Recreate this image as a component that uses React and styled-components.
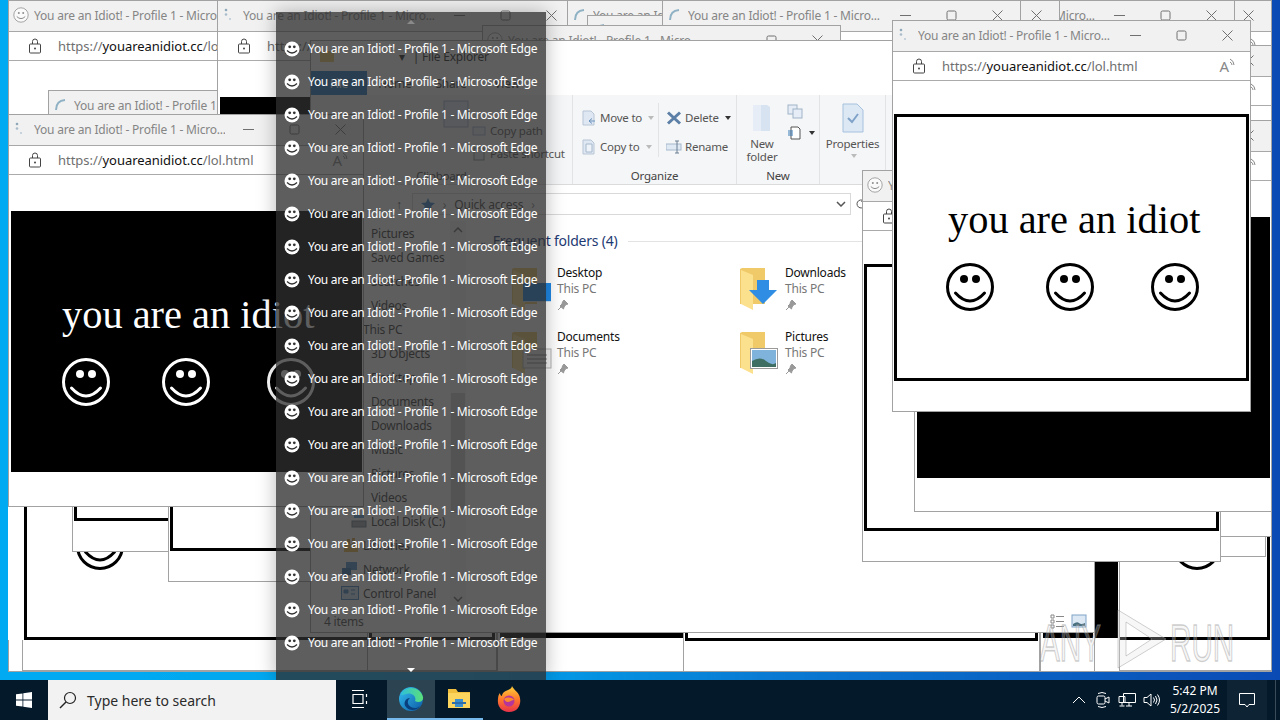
import React from "react";
import styled, { createGlobalStyle } from "styled-components";

const UI = `"Noto Sans", "Open Sans", sans-serif`;

const Global = createGlobalStyle`
  html, body { margin: 0; padding: 0; background: #000; }
  * { box-sizing: border-box; }
`;

const Screen = styled.div`
  width: 1280px;
  height: 720px;
  display: flex;
  flex-direction: column;
  overflow: hidden;
  font-family: ${UI};
`;

const Desktop = styled.div`
  position: relative;
  flex: 1;
  overflow: hidden;
  background: linear-gradient(90deg, #00aaf2 0%, #00a6ee 35%, #0a7ad2 60%, #0a4ab4 100%);
`;

const Frame = styled.div`
  position: absolute;
  left: ${(p) => p.$x}px;
  top: ${(p) => p.$y}px;
  width: ${(p) => p.$w}px;
  height: ${(p) => p.$h}px;
  background: #fff;
  border: 1px solid ${(p) => (p.$bare ? "#fff" : "#a2a2a2")};
  overflow: hidden;
  display: flex;
  flex-direction: column;
`;

const TitleBar = styled.div`
  flex: none;
  height: 31px;
  display: flex;
  align-items: center;
  padding: 0 0 2px 4px;
  background: #f1f1f1;
  border-bottom: 1px solid #a8a8a8;
`;

const TitleText = styled.span`
  flex: 1;
  min-width: 0;
  margin-left: 5px;
  font-size: 12px;
  letter-spacing: -0.2px;
  color: #858585;
  white-space: nowrap;
  overflow: hidden;
`;

const Ctl = styled.span`
  flex: none;
  width: 46px;
  height: 28px;
  display: flex;
  align-items: center;
  justify-content: center;
  color: #707070;
`;

const UrlBar = styled.div`
  flex: none;
  height: 29px;
  display: flex;
  align-items: center;
  padding: 0 14px 0 19px;
  border-bottom: 1px solid #ababab;
`;

const UrlText = styled.span`
  flex: 1;
  min-width: 0;
  margin-left: 16px;
  font-size: 13px;
  letter-spacing: -0.04px;
  color: #6f6f6f;
  white-space: nowrap;
  overflow: hidden;
  b { font-weight: 400; color: #111; }
`;

const ReadAloud = styled.span`
  flex: none;
  display: flex;
  align-items: flex-start;
  font-size: 15px;
  line-height: 17px;
  color: #888;
`;

const Page = styled.div`
  flex: 1;
  padding: 33px 1px 0;
`;

const Stage = styled.div`
  width: 100%;
  height: 267px;
  overflow: hidden;
  border-style: solid;
  border-width: ${(p) => (p.$dark ? "3px 0 3px 1px" : "3px")};
  border-color: ${(p) => (p.$dark ? "#fff" : "#000")};
  background: ${(p) => (p.$dark ? "#000" : "#fff")};
  color: ${(p) => (p.$dark ? "#fff" : "#000")};
`;

const StageInner = styled.div`
  width: 352px;
  padding: ${(p) => (p.$dark ? "81px 0 0 51px" : "80px 0 0 49px")};
`;

const Idiot = styled.div`
  margin-left: ${(p) => (p.$dark ? 0 : 2)}px;
  font-family: "Liberation Serif", serif;
  font-size: 40.4px;
  line-height: 46px;
  white-space: nowrap;
`;

const SmileRow = styled.div`
  display: grid;
  grid-template-columns: 100px 105px 48px;
  margin-top: 20px;
`;

const MinIcon = () => (
  <svg width="11" height="11" viewBox="0 0 11 11"><path d="M0 5.5h11" stroke="currentColor" fill="none" /></svg>
);
const MaxIcon = () => (
  <svg width="11" height="11" viewBox="0 0 11 11"><rect x="1" y="1" width="9" height="9" rx="1.5" stroke="currentColor" fill="none" /></svg>
);
const CloseIcon = () => (
  <svg width="11" height="11" viewBox="0 0 11 11"><path d="M.5.5l10 10M10.5.5l-10 10" stroke="currentColor" fill="none" /></svg>
);
const LockIcon = () => (
  <svg width="14" height="16" viewBox="0 0 14 16" style={{ flex: "none" }}>
    <rect x="1.5" y="6" width="11" height="9" rx="1" fill="none" stroke="#444" />
    <path d="M4.5 6V3.5a2.5 2.5 0 0 1 5 0V6" fill="none" stroke="#444" />
    <circle cx="7" cy="10.5" r="1" fill="#444" />
  </svg>
);

const TabIcon = ({ kind }) => {
  if (kind === "smile")
    return (
      <svg width="16" height="16" viewBox="0 0 16 16" style={{ flex: "none" }}>
        <circle cx="8" cy="8" r="7.2" fill="#fafafa" stroke="#a4a4a4" />
        <circle cx="5.8" cy="6" r="1" fill="#8d8d8d" />
        <circle cx="10.2" cy="6" r="1" fill="#8d8d8d" />
        <path d="M3.8 9.6Q8 13.6 12.2 9.6" fill="none" stroke="#8d8d8d" />
      </svg>
    );
  if (kind === "arc")
    return (
      <svg width="16" height="16" viewBox="0 0 16 16" style={{ flex: "none" }}>
        <path d="M3 13C3 7 6 3.500 12 3" fill="none" stroke="#8fb1c4" strokeWidth="2" />
      </svg>
    );
  return (
    <svg width="16" height="16" viewBox="0 0 16 16" style={{ flex: "none" }}>
      <circle cx="4" cy="3" r="1.3" fill="#8fa9bb" />
      <circle cx="4" cy="7.500" r="1.3" fill="#a9bccb" />
      <circle cx="8" cy="12" r="1" fill="#b9c8d4" />
    </svg>
  );
};

const BigSmile = () => (
  <svg width="48" height="48" viewBox="0 0 48 48">
    <circle cx="24" cy="24" r="22.500" fill="none" stroke="currentColor" strokeWidth="3" />
    <circle cx="18" cy="16" r="4" fill="currentColor" />
    <circle cx="30" cy="16" r="4" fill="currentColor" />
    <path d="M9.500 30Q24 46 38.500 30" fill="none" stroke="currentColor" strokeWidth="3" strokeLinecap="round" />
  </svg>
);

const Win = ({ x, y, w = 359, h = 392, bare, icon = "smile", title = "You are an Idiot! - Profile 1 - Micro...", stage = "light" }) => (
  <Frame $x={x} $y={y} $w={w} $h={h} $bare={bare}>
    <TitleBar>
      <TabIcon kind={icon} />
      <TitleText>{title}</TitleText>
      <Ctl><MinIcon /></Ctl>
      <Ctl><MaxIcon /></Ctl>
      <Ctl><CloseIcon /></Ctl>
    </TitleBar>
    <UrlBar>
      <LockIcon />
      <UrlText>https://<b>youareanidiot.cc</b>/lol.html</UrlText>
      <ReadAloud>
        A
        <svg width="7" height="10" viewBox="0 0 7 10"><path d="M1 1q4 2 4 6M1 4q2 1 2 3" fill="none" stroke="#888" /></svg>
      </ReadAloud>
    </UrlBar>
    <Page>
      {stage !== "none" && (
        <Stage $dark={stage === "dark"}>
          <StageInner $dark={stage === "dark"}>
            <Idiot $dark={stage === "dark"}>you are an idiot</Idiot>
            <SmileRow>
              <BigSmile />
              <BigSmile />
              <BigSmile />
            </SmileRow>
          </StageInner>
        </Stage>
      )}
    </Page>
  </Frame>
);

const backWindows = [
  { x: 8, y: 280, w: 1264, stage: "none", title: "" },
  { x: 914, y: 279, w: 358 },
  { x: 763, y: 280, w: 357, h: 392, stage: "dark" },
  { x: 1040, y: 280, w: 55, stage: "dark" },
  { x: 22, y: 279, w: 478 },
  { x: 8, y: 248, w: 15, bare: true, stage: "none", title: "" },
  { x: 367, y: 279, w: 130 },
  { x: 497, y: 280, w: 192, stage: "dark" },
  { x: 683, y: 280, w: 357 },
  { x: 907, y: 165 },
  { x: 914, y: 145, w: 358 },
  { x: 72, y: 160 },
  { x: 168, y: 190 },
  { x: 8, y: 0, stage: "none", title: "You are an Idiot! - Profile 1 - Microsoft Edge" },
  { x: 48, y: 90, icon: "arc", title: "You are an Idiot! - Profile 1 - Microsoft Edge" },
  { x: 217, y: 0, w: 358, icon: "dots", stage: "dark" },
  { x: 567, y: 0, icon: "arc" },
  { x: 587, y: 15, icon: "arc" },
  { x: 913, y: 0, w: 359 },
  { x: 877, y: 0, w: 358 },
  { x: 702, y: 0, w: 358 },
  { x: 662, y: 0, icon: "arc" },
  { x: 482, y: 25 },
];

const frontWindows = [
  { x: 8, y: 114, w: 356, h: 393, icon: "dots", stage: "dark" },
  { x: 914, y: 45, w: 358 },
  { x: 862, y: 170 },
  { x: 914, y: 120, w: 358, stage: "dark" },
  { x: 892, y: 20, icon: "dots" },
];

/* ---------- file explorer ---------- */

const Explorer = styled.div`
  position: absolute;
  left: 310px;
  top: 40px;
  width: 785px;
  height: 593px;
  background: #fff;
  border: 1px solid #a2a2a2;
  display: flex;
  flex-direction: column;
  overflow: hidden;
  font-size: 12px;
  letter-spacing: -0.22px;
  color: #111;
`;

const ExpTitle = styled.div`
  flex: none;
  height: 30px;
  display: flex;
  align-items: center;
  padding-left: 8px;
  gap: 8px;
  color: #222;
`;

const ExpTabs = styled.div`
  flex: none;
  height: 24px;
  display: flex;
  align-items: stretch;
`;

const ExpTab = styled.span`
  width: 56px;
  display: flex;
  align-items: center;
  justify-content: center;
  background: ${(p) => (p.$file ? "#1a78c8" : "transparent")};
  color: ${(p) => (p.$file ? "#fff" : "#333")};
`;

const Ribbon = styled.div`
  flex: none;
  height: 90px;
  display: flex;
  background: #f5f6f7;
  border-bottom: 1px solid #dadbdc;
  color: #555;
  font-size: 11.5px;
`;

const RibbonGroup = styled.div`
  flex: none;
  width: ${(p) => p.$w}px;
  display: flex;
  flex-direction: column;
  border-right: 1px solid #e2e3e4;
`;

const GroupBody = styled.div`
  flex: 1;
  min-height: 0;
  display: flex;
  padding: ${(p) => p.$pad || "0"};
`;

const GroupLabel = styled.div`
  flex: none;
  height: 19px;
  text-align: center;
  font-size: 11.5px;
  line-height: 22px;
  color: #444;
`;

const SmallList = styled.div`
  display: flex;
  flex-direction: column;
`;

const SmallBtn = styled.div`
  height: ${(p) => p.$h}px;
  display: flex;
  align-items: center;
  gap: 3px;
  white-space: nowrap;
`;

const Caret = styled.i`
  width: 0;
  height: 0;
  margin-left: 3px;
  border: 3px solid transparent;
  border-top: 4px solid ${(p) => (p.$dark ? "#333" : "#bbb")};
  border-bottom: 0;
`;

const Sep = styled.div`
  width: 1px;
  margin: 0 7px;
  height: 54px;
  background: #e2e3e4;
`;

const BigBtn = styled.div`
  flex: 1;
  display: flex;
  flex-direction: column;
  align-items: center;
  text-align: center;
  line-height: 13px;
  padding-top: ${(p) => p.$top}px;
  gap: 4px;
`;

const AddressRow = styled.div`
  flex: none;
  height: 36px;
  display: flex;
  align-items: center;
  padding: 2px 0 0 85px;
  gap: 12px;
  color: #444;
`;

const AddressBox = styled.div`
  width: 439px;
  height: 22px;
  display: flex;
  align-items: center;
  gap: 8px;
  padding: 0 4px 0 8px;
  border: 1px solid #d9d9d9;
  margin-left: -2px;
  font-size: 12px;
`;

const Body = styled.div`
  flex: 1;
  min-height: 0;
  display: flex;
`;

const Nav = styled.div`
  flex: none;
  width: 155px;
  position: relative;
  color: #333;
`;

const NavItem = styled.div`
  height: 24px;
  display: flex;
  align-items: center;
  gap: 4px;
  padding-left: ${(p) => p.$pad}px;
  white-space: nowrap;
`;

const NavScroll = styled.div`
  position: absolute;
  right: 0;
  top: 0;
  bottom: 4px;
  width: 16px;
  padding-top: 6px;
  background: #f4f4f4;
  color: #666;
`;

const Thumb = styled.div`
  position: absolute;
  left: 1px;
  right: 1px;
  top: 172px;
  height: 120px;
  background: #d0d0d0;
`;

const ScrollCue = styled.svg`
  position: absolute;
  left: 3px;
  ${(p) => (p.$down ? "bottom: 4px;" : "top: 6px;")}
`;

const Content = styled.div`
  flex: 1;
  min-width: 0;
`;

const SectionHead = styled.div`
  height: 30px;
  padding: 10px 0 0 13px;
  display: flex;
  align-items: center;
  gap: 6px;
  font-size: 14px;
  line-height: 20px;
  color: #1e3a73;
`;

const SectionLine = styled.div`
  flex: none;
  width: 235px;
  height: 1px;
  margin-left: 4px;
  background: #e3e3e3;
`;

const TileGrid = styled.div`
  display: grid;
  grid-template-columns: 228px 228px;
  grid-auto-rows: 64px;
  margin: 14px 0 0 46px;
`;

const Tile = styled.div`
  display: flex;
  align-items: flex-start;
`;

const TileIcon = styled.div`
  flex: none;
  width: 45px;
  height: 48px;
  margin-top: -1px;
`;

const TileText = styled.div`
  font-size: 12px;
  line-height: 16px;
  color: #111;
  small { display: block; font-size: 12px; color: #777; }
`;

const StatusBar = styled.div`
  flex: none;
  height: 22px;
  display: flex;
  align-items: center;
  justify-content: space-between;
  padding: 0 7px 0 13px;
  color: #444;
`;

const StatusIcons = styled.div`
  display: flex;
  gap: 6px;
`;

const Folder = ({ children }) => (
  <svg width="45" height="46" viewBox="0 0 45 46">
    <path d="M0 5l2-1h23v36H0z" fill="#f0c968" />
    <path d="M1 6l12 5v35L1 40z" fill="#fbe08e" />
    {children}
  </svg>
);

const Pin = () => (
  <svg width="12" height="12" viewBox="0 0 12 12" style={{ display: "block", marginTop: 2 }}>
    <path d="M7 1l4 4-2 .5-2 2.500-.5 2L3 7l2-2 .5-2zM4 8l-3 3" fill="#999" stroke="#999" />
  </svg>
);

const tiles = [
  {
    name: "Desktop",
    art: (
      <>
        <rect x="11" y="19" width="28" height="19" fill="#1e88e5" />
        <rect x="11" y="37" width="28" height="1" fill="#cfe4f5" />
      </>
    ),
  },
  {
    name: "Downloads",
    art: <path d="M17 16h12v10h8L23 40 9 26h8z" fill="#2f8de4" />,
  },
  {
    name: "Documents",
    art: (
      <>
        <rect x="11" y="21" width="28" height="19" fill="#f4f4f4" stroke="#b5b5b5" />
        <path d="M15 27h20M15 31h20M15 35h20" stroke="#8a8a8a" />
      </>
    ),
  },
  {
    name: "Pictures",
    art: (
      <>
        <rect x="10.500" y="20.500" width="27" height="20" fill="#fff" stroke="#9a9a9a" />
        <rect x="12" y="22" width="24" height="17" fill="#7fb3dc" />
        <path d="M12 33q8-5 14 0t10 2v4H12z" fill="#3f6f62" />
      </>
    ),
  },
];

const DriveIcon = () => (
  <svg width="16" height="14" viewBox="0 0 16 14" style={{ flex: "none" }}>
    <path d="M3 1h10v3H3z" fill="#5a9bd8" />
    <rect x="1" y="7" width="14" height="6" fill="#9aa5ad" stroke="#6c7880" />
  </svg>
);
const LibIcon = () => (
  <svg width="16" height="16" viewBox="0 0 16 16" style={{ flex: "none" }}>
    <rect x="1" y="7" width="14" height="8" fill="#e8b84a" />
    <path d="M4 7V2h3v5M9 7V1h3v6" fill="#d9a23a" />
  </svg>
);
const NetIcon = () => (
  <svg width="18" height="16" viewBox="0 0 18 16" style={{ flex: "none" }}>
    <rect x="5" y="1" width="11" height="8" fill="#4f8fd0" />
    <rect x="1" y="7" width="9" height="7" fill="#2f6fb0" />
    <path d="M3 15h5" stroke="#4f8fd0" />
  </svg>
);
const PanelIcon = () => (
  <svg width="18" height="14" viewBox="0 0 18 14" style={{ flex: "none" }}>
    <rect x=".5" y=".5" width="17" height="13" fill="#cfe3f6" stroke="#3f83c4" />
    <path d="M3 4h4v3H3zM10 4h4M10 8h4" fill="#3f83c4" stroke="#3f83c4" />
  </svg>
);

const navItems = [
  { label: "Pictures", pad: 60 },
  { label: "Saved Games", pad: 60 },
  { label: "Searches", pad: 60 },
  { label: "Videos", pad: 60 },
  { label: "This PC", pad: 52 },
  { label: "3D Objects", pad: 60 },
  { label: "Desktop", pad: 60 },
  { label: "Documents", pad: 60 },
  { label: "Downloads", pad: 60 },
  { label: "Music", pad: 60 },
  { label: "Pictures", pad: 60 },
  { label: "Videos", pad: 60 },
  { label: "Local Disk (C:)", pad: 40, icon: <DriveIcon /> },
  { label: "Libraries", pad: 32, icon: <LibIcon /> },
  { label: "Network", pad: 30, icon: <NetIcon /> },
  { label: "Control Panel", pad: 30, icon: <PanelIcon /> },
];

const I = ({ w = 16, h = 16, children }) => (
  <svg width={w} height={h} viewBox={`0 0 ${w} ${h}`} style={{ flex: "none" }}>{children}</svg>
);

const ExplorerWindow = () => (
  <Explorer>
    <ExpTitle>
      <I><path d="M1 3h14v11H1z" fill="#f0c968" /></I>
      <span style={{ width: 48 }} />
      <span>▾</span>
      <span>| File Explorer</span>
    </ExpTitle>
    <ExpTabs>
      <ExpTab $file>File</ExpTab>
      <ExpTab>Home</ExpTab>
      <ExpTab>Share</ExpTab>
      <ExpTab>View</ExpTab>
    </ExpTabs>
    <Ribbon>
      <RibbonGroup $w={262}>
        <GroupBody $pad="1px 0 0 130px">
          <I w={30} h={34}><rect x="3" y="5" width="24" height="26" fill="#dfe9f4" stroke="#9fb3c8" /></I>
          <SmallList>
            <SmallBtn $h={23}><I /><span /></SmallBtn>
            <SmallBtn $h={23}><I><rect x="2" y="4" width="12" height="8" fill="#e8eef5" stroke="#9fb3c8" /></I>Copy path</SmallBtn>
            <SmallBtn $h={23}><I><rect x="3" y="2" width="10" height="12" fill="#e8eef5" stroke="#8a8a8a" /></I>Paste shortcut</SmallBtn>
          </SmallList>
        </GroupBody>
        <GroupLabel>Clipboard</GroupLabel>
      </RibbonGroup>
      <RibbonGroup $w={164}>
        <GroupBody $pad="8px 0 0 8px">
          <SmallList style={{ width: 70 }}>
            <SmallBtn $h={29}>
              <I><path d="M2 1h8l3 3v11H2z" fill="#dfe7f2" stroke="#b8c5d6" /><path d="M8 11h6M8 11l3-2.500M8 11l3 2.500" stroke="#6b93bd" fill="none" /></I>
              Move to<Caret />
            </SmallBtn>
            <SmallBtn $h={29}>
              <I><path d="M2 1h8l3 3v11H2z" fill="#dfe7f2" stroke="#b8c5d6" /><path d="M5 5h6v8H5z" fill="#eef3f9" stroke="#a6b8cc" /></I>
              Copy to<Caret />
            </SmallBtn>
          </SmallList>
          <Sep />
          <SmallList>
            <SmallBtn $h={29}>
              <I><path d="M2 2.500l12 11M14 2.500l-12 11" stroke="#5b7fa6" strokeWidth="3" /></I>
              Delete<Caret $dark />
            </SmallBtn>
            <SmallBtn $h={29}>
              <I><rect x="0" y="5" width="15" height="6" fill="#dfe9f4" stroke="#a6b8cc" /><path d="M11 2v12M9 2h4M9 14h4" stroke="#6b7f93" /></I>
              Rename
            </SmallBtn>
          </SmallList>
        </GroupBody>
        <GroupLabel>Organize</GroupLabel>
      </RibbonGroup>
      <RibbonGroup $w={83}>
        <GroupBody>
          <BigBtn $top={10}>
            <I w={24} h={28}><path d="M3 0h14l3 2v24H3z" fill="#d8e3f1" /><path d="M3 0h8v26H3z" fill="#e6edf6" /></I>
            <span>New<br />folder</span>
          </BigBtn>
          <SmallList style={{ width: 32, paddingTop: 6 }}>
            <SmallBtn $h={21}><I w={22}><rect x="1" y="1" width="9" height="9" fill="#e6edf6" stroke="#9fb3c8" /><rect x="6" y="5" width="9" height="9" fill="#e6edf6" stroke="#9fb3c8" /></I></SmallBtn>
            <SmallBtn $h={21}><I><path d="M4 2h7l2 2v10H4z" fill="#fff" stroke="#555" /><path d="M1 6h5M1 8h5M1 10h5" stroke="#3a7ab8" /></I><Caret $dark /></SmallBtn>
          </SmallList>
        </GroupBody>
        <GroupLabel>New</GroupLabel>
      </RibbonGroup>
      <RibbonGroup $w={66}>
        <GroupBody>
          <BigBtn $top={8}>
            <I w={24} h={30}><path d="M2 1h14l6 6v22H2z" fill="#dde8f5" stroke="#a6c1dd" /><path d="M7 15l4 4 6-8" fill="none" stroke="#7fa3c8" strokeWidth="2" /></I>
            <span>Properties</span>
            <Caret />
          </BigBtn>
        </GroupBody>
        <GroupLabel />
      </RibbonGroup>
    </Ribbon>
    <AddressRow>
      <span>↑</span>
      <AddressBox>
        <I w={14} h={14}><path d="M7 1l2 4.500 5 .5-3.700 3.200 1.100 4.800L7 11l-4.400 2.500 1.100-4.800L0 6l5-.5z" fill="#2f7fc8" /></I>
        <span style={{ color: "#888" }}>›</span>
        <span>Quick access</span>
        <span style={{ color: "#888" }}>›</span>
        <span style={{ flex: 1 }} />
        <svg width="10" height="6" viewBox="0 0 10 6"><path d="M1 1l4 4 4-4" fill="none" stroke="#555" strokeWidth="1.500" /></svg>
      </AddressBox>
      <svg width="12" height="12" viewBox="0 0 12 12" style={{ marginLeft: -8 }}><path d="M10 6a4 4 0 1 1-1.300-3M9 .5V3.300H6.200" fill="none" stroke="#555" /></svg>
    </AddressRow>
    <Body>
      <Nav>
        {navItems.map((n, i) => (
          <NavItem key={i} $pad={n.pad}>{n.icon}{n.label}</NavItem>
        ))}
        <NavScroll>
          <Thumb />
          <ScrollCue width="10" height="6" viewBox="0 0 10 6"><path d="M1 5l4-4 4 4" fill="none" stroke="currentColor" strokeWidth="1.500" /></ScrollCue>
          <ScrollCue $down width="10" height="6" viewBox="0 0 10 6"><path d="M1 1l4 4 4-4" fill="none" stroke="currentColor" strokeWidth="1.500" /></ScrollCue>
        </NavScroll>
      </Nav>
      <Content>
        <SectionHead>
          <span style={{ fontSize: 10 }}>⌄</span>
          Frequent folders (4)
          <SectionLine />
        </SectionHead>
        <TileGrid>
          {tiles.map((t) => (
            <Tile key={t.name}>
              <TileIcon><Folder>{t.art}</Folder></TileIcon>
              <TileText>
                {t.name}
                <small>This PC</small>
                <Pin />
              </TileText>
            </Tile>
          ))}
        </TileGrid>
      </Content>
    </Body>
    <StatusBar>
      4 items
      <StatusIcons>
        <I><path d="M2 2h3v3H2zM2 7h3v3H2zM2 12h3v3H2zM7 3.500h8M7 8.500h8M7 13.500h8" fill="none" stroke="#888" /></I>
        <I><rect x="1" y="2" width="14" height="12" fill="#dce9f5" stroke="#7fa3c8" /><path d="M2 11q4-3 6-1t6 0v3H2z" fill="#4a6f7f" /></I>
      </StatusIcons>
    </StatusBar>
  </Explorer>
);

/* ---------- taskbar thumbnail list ---------- */

const Preview = styled.div`
  position: absolute;
  left: 276px;
  top: 12px;
  width: 270px;
  height: 668px;
  background: rgba(46, 46, 46, 0.77);
  box-shadow: 0 0 18px rgba(0, 0, 0, 0.28);
  display: flex;
  flex-direction: column;
`;

const Arrow = styled.div`
  flex: none;
  height: ${(p) => p.$h}px;
  display: flex;
  align-items: center;
  justify-content: center;
  i {
    width: 0;
    height: 0;
    border: 4px solid transparent;
    ${(p) => (p.$up ? "border-bottom: 4px solid #8a8a8a; border-top: 0;" : "border-top: 4px solid #fff; border-bottom: 0;")}
  }
`;

const PreviewRow = styled.div`
  flex: none;
  height: 33px;
  display: flex;
  align-items: center;
  padding-left: 8px;
  gap: 8px;
  font-size: 12px;
  letter-spacing: -0.3px;
  color: #fff;
  white-space: nowrap;
`;

const RowSmile = () => (
  <svg width="16" height="16" viewBox="0 0 16 16" style={{ flex: "none" }}>
    <circle cx="8" cy="8" r="7.500" fill="#fff" />
    <circle cx="5.700" cy="5.800" r="1.400" fill="#333" />
    <circle cx="10.300" cy="5.800" r="1.400" fill="#333" />
    <path d="M3 9.500Q8 14.500 13 9.500" fill="none" stroke="#333" strokeWidth="1.200" />
  </svg>
);

/* ---------- watermark ---------- */

const Watermark = styled.div`
  position: absolute;
  left: 1040px;
  top: 608px;
  width: 194px;
  height: 62px;
  display: flex;
  align-items: center;
  pointer-events: none;
`;

const MarkText = styled.span`
  display: block;
  width: ${(p) => p.$w}px;
  font-family: "Liberation Sans", sans-serif;
  font-size: 52px;
  line-height: 62px;
  padding-top: 8px;
  color: rgba(225, 225, 225, 0.28);
  -webkit-text-stroke: 1.5px rgba(150, 150, 150, 0.45);
  transform: scaleX(0.57);
  transform-origin: left center;
  white-space: nowrap;
`;

/* ---------- taskbar ---------- */

const Taskbar = styled.div`
  flex: none;
  height: 40px;
  display: flex;
  background: #04192a;
  color: #fff;
`;

const StartBtn = styled.div`
  width: 48px;
  display: flex;
  align-items: center;
  justify-content: center;
`;

const SearchBox = styled.div`
  width: 288px;
  display: flex;
  align-items: center;
  gap: 10px;
  padding-left: 11px;
  background: #f2f2f2;
  color: #2b2b2b;
  font-size: 14px;
`;

const TaskBtn = styled.div`
  width: 48px;
  margin-left: ${(p) => p.$ml || 0}px;
  display: flex;
  align-items: center;
  justify-content: center;
  background: ${(p) => (p.$active ? "#2c4352" : "transparent")};
  border-bottom: 2px solid ${(p) => (p.$open ? "#76b9ed" : "transparent")};
  background-clip: padding-box;
`;

const Tray = styled.div`
  margin-left: auto;
  display: flex;
  align-items: stretch;
`;

const TrayIcon = styled.div`
  width: 24px;
  display: flex;
  align-items: center;
  justify-content: center;
`;

const Clock = styled.div`
  width: 64px;
  display: flex;
  flex-direction: column;
  align-items: center;
  justify-content: center;
  font-size: 12px;
  line-height: 18px;
`;

const Notify = styled.div`
  width: 40px;
  display: flex;
  align-items: center;
  justify-content: center;
  background: #0e2434;
`;

const ShowDesktop = styled.div`
  width: 13px;
  border-right: 4px solid #04192a;
  box-shadow: inset -1px 0 0 #3a4c5a;
`;

const EdgeLogo = () => (
  <svg width="26" height="26" viewBox="0 0 26 26">
    <defs>
      <linearGradient id="edgeA" x1="0" y1="0" x2="1" y2="1">
        <stop offset="0" stopColor="#35c1f1" />
        <stop offset="1" stopColor="#0c59a4" />
      </linearGradient>
      <linearGradient id="edgeB" x1="0" y1="0" x2="1" y2="0">
        <stop offset="0" stopColor="#2fbfd8" />
        <stop offset="1" stopColor="#5be07a" />
      </linearGradient>
    </defs>
    <circle cx="13" cy="13" r="12" fill="url(#edgeA)" />
    <path d="M3 8C6 0 22-1 25 11c1 5-5 6-8 4 2-5-4-9-9-7-3 1-4 2-5 0z" fill="url(#edgeB)" />
    <path d="M12 12c-3 2-3 7 1 9 3 2 7 1 9-1-3 5-11 5-14 1-3-3-1-9 4-9z" fill="#0a3f7e" />
  </svg>
);

const FolderLogo = () => (
  <svg width="24" height="22" viewBox="0 0 24 22">
    <path d="M1 1h8l2 3h12v16H1z" fill="#f0bf3e" />
    <rect x="1" y="5" width="22" height="15" fill="#fcd55f" />
    <rect x="8" y="11" width="8" height="8" fill="#3a8fd0" />
    <rect x="5" y="14" width="14" height="2" fill="#2f6da8" />
  </svg>
);

const FoxLogo = () => (
  <svg width="24" height="26" viewBox="0 0 24 26">
    <defs>
      <linearGradient id="foxA" x1="0" y1="0" x2="0" y2="1">
        <stop offset="0" stopColor="#ffd33a" />
        <stop offset="0.500" stopColor="#ff7a2b" />
        <stop offset="1" stopColor="#e8324a" />
      </linearGradient>
    </defs>
    <path d="M15 0c1 3 5 5 7 9 3 6 1 17-10 17C4 26 0 20 1 13c0-3 1-5 2-6 0 2 1 3 2 3 0-3 3-5 6-6 2-1 4-2 4-4z" fill="url(#foxA)" />
    <circle cx="12" cy="15" r="5.500" fill="#b5359a" />
    <path d="M7 13c3-2 8-2 10 1-2 0-3 1-4 1.500-3 1-4.500 0-6-2.500z" fill="#ff8a2b" />
  </svg>
);

export default function App() {
  return (
    <Screen>
      <Global />
      <Desktop>
        {backWindows.map((w, i) => <Win key={i} {...w} />)}
        <ExplorerWindow />
        {frontWindows.map((w, i) => <Win key={i} {...w} />)}
        <Watermark>
          <MarkText $w={72}>ANY</MarkText>
          <svg width="58" height="62" viewBox="0 0 58 62" style={{ flex: "none" }}>
            <path d="M6 2l48 29L6 60zM14 14l26 17-26 17z" fill="rgba(225,225,225,.28)" fillRule="evenodd" stroke="rgba(150,150,150,.45)" />
          </svg>
          <MarkText $w={64}>RUN</MarkText>
        </Watermark>
        <Preview>
          <Arrow $h={20} $up><i /></Arrow>
          {Array.from({ length: 19 }, (_, i) => (
            <PreviewRow key={i}>
              <RowSmile />
              You are an Idiot! - Profile 1 - Microsoft Edge
            </PreviewRow>
          ))}
          <Arrow $h={21}><i /></Arrow>
        </Preview>
      </Desktop>
      <Taskbar>
        <StartBtn>
          <svg width="16" height="16" viewBox="0 0 16 16"><path d="M0 2.300l6.500-.9v6.200H0zM7.300 1.300L16 0v7.600H7.300zM0 8.400h6.500v6.200L0 13.700zM7.300 8.400H16V16l-8.700-1.200z" fill="#fff" /></svg>
        </StartBtn>
        <SearchBox>
          <svg width="18" height="18" viewBox="0 0 18 18"><circle cx="11" cy="7" r="5.500" fill="none" stroke="#222" strokeWidth="1.200" /><path d="M7 11l-6 6" stroke="#222" strokeWidth="1.400" /></svg>
          Type here to search
        </SearchBox>
        <TaskBtn>
          <svg width="18" height="18" viewBox="0 0 18 18"><path d="M1 .5h12M1 17.500h12M2 4.500h10v9H2zM15.500 4v3M15.500 11v3" fill="none" stroke="#fff" strokeWidth="1.200" /></svg>
        </TaskBtn>
        <TaskBtn $ml={3} $active $open><EdgeLogo /></TaskBtn>
        <TaskBtn $open><FolderLogo /></TaskBtn>
        <TaskBtn $ml={2}><FoxLogo /></TaskBtn>
        <Tray>
          <TrayIcon>
            <svg width="14" height="8" viewBox="0 0 14 8"><path d="M1 7l6-6 6 6" fill="none" stroke="#fff" /></svg>
          </TrayIcon>
          <TrayIcon>
            <svg width="14" height="18" viewBox="0 0 14 18"><rect x="1" y="5" width="8" height="8" rx="1.500" fill="none" stroke="#fff" /><path d="M9 8l4-2v6l-4-2M2 2.500q4-2 8 0M2 15.500q4 2 8 0" fill="none" stroke="#fff" /></svg>
          </TrayIcon>
          <TrayIcon>
            <svg width="18" height="16" viewBox="0 0 18 16"><path d="M5.500 1.500h12v9h-12zM1 4.500h6v6H1zM4 10.500v3M1.500 14h5M11 10.500V14M8 14h6" fill="#04192a" stroke="#fff" /></svg>
          </TrayIcon>
          <TrayIcon>
            <svg width="17" height="14" viewBox="0 0 17 14"><path d="M1 4.500h3L8 1v12L4 9.500H1zM10.500 4.500q2 2.500 0 5M12.500 3q3 4 0 8M14.500 1.500q4 5.500 0 11" fill="none" stroke="#fff" /></svg>
          </TrayIcon>
          <Clock>
            <span>5:42 PM</span>
            <span>5/2/2025</span>
          </Clock>
          <Notify>
            <svg width="16" height="15" viewBox="0 0 16 15"><path d="M.5.5h15v11H10L8 14l-2-2.500H.5z" fill="none" stroke="#fff" /></svg>
          </Notify>
          <ShowDesktop />
        </Tray>
      </Taskbar>
    </Screen>
  );
}
